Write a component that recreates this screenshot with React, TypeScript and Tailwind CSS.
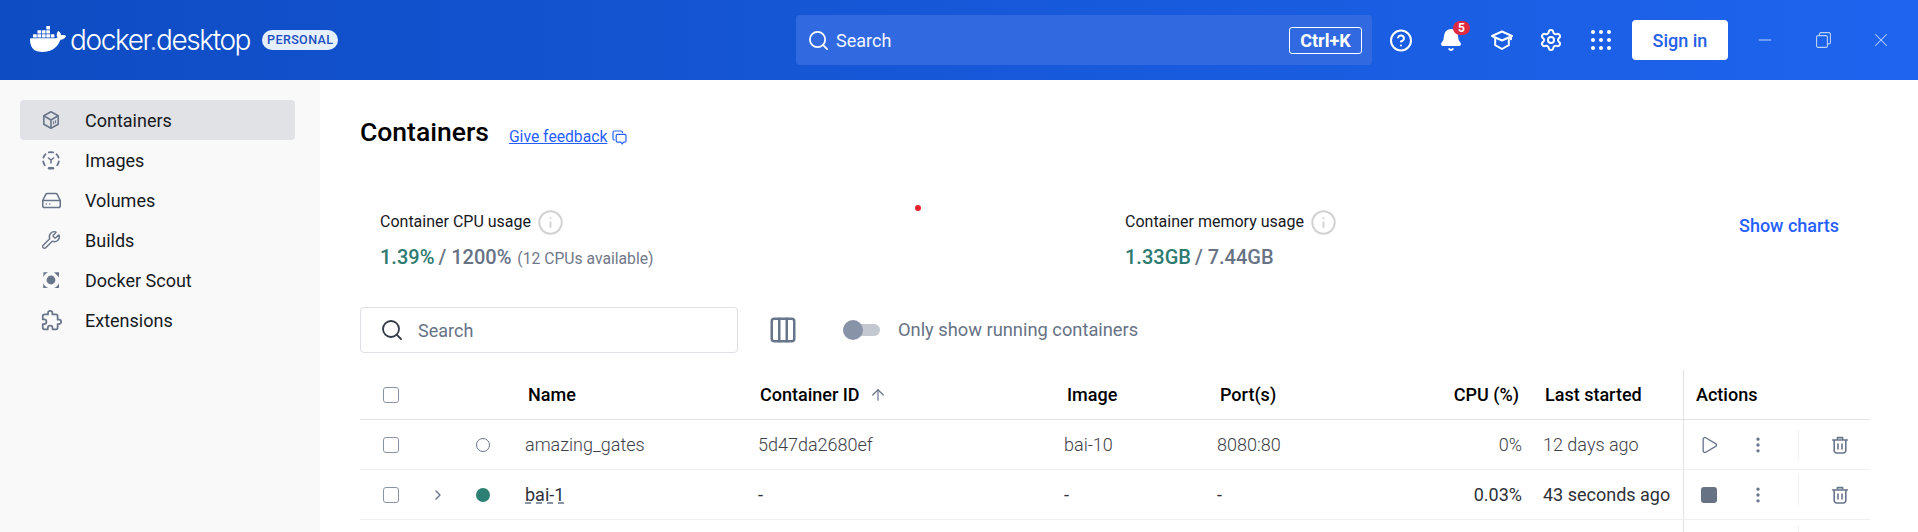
import React from "react";
import { SiDocker } from "react-icons/si";
import {
  Search, CircleHelp, Bell, Settings, Minus, X, Info, Columns3, ArrowUp, ChevronRight, Play, EllipsisVertical, HardDrive, Wrench,
} from "lucide-react";

const BoxIcon = () => (
  <svg width="20" height="20" viewBox="0 0 20 20" fill="none" stroke="#69758a" strokeWidth="1.6" strokeLinejoin="round">
    <path d="M10 1.8 17.2 5.8V14.2L10 18.2 2.8 14.2V5.8Z" />
    <path d="M2.8 5.8 10 10 17.2 5.8M10 10V18.2" />
    <path d="M12.6 11.2v3M14.6 10.2v3" strokeWidth="1.1" />
  </svg>
);
const ImagesIcon = () => (
  <svg width="20" height="20" viewBox="0 0 20 20" fill="none" stroke="#69758a" strokeWidth="1.8" strokeLinecap="round">
    <path d="M7.8 2.4a8 8 0 0 1 4.4 0" />
    <path d="M15.4 4.2a8 8 0 0 1 2.2 3.4" />
    <path d="M17.8 11.4a8 8 0 0 1-1.6 3.8" />
    <path d="M3.8 15.2a8 8 0 0 1-1.6-3.8" />
    <path d="M2.4 7.6a8 8 0 0 1 2.2-3.4" />
    <path d="M7.4 8 10 10l2.6-2M10 10v3" strokeWidth="1.5" />
    <path d="M8 18.2h4" strokeWidth="2.4" />
  </svg>
);
const ScoutIcon = () => (
  <svg width="20" height="20" viewBox="0 0 20 20" fill="#69758a">
    <circle cx="10" cy="10" r="4.4" />
    <path d="M13 2.2h5v5zM7 2.2H2.4v5c.7-2.2 2.4-4 4.6-5zM2.2 13v5h5c-2.3-.8-4.2-2.7-5-5zM18 13v5h-5c2.3-.8 4.2-2.7 5-5z" />
  </svg>
);
const PuzzleIcon = () => (
  <svg width="21" height="21" viewBox="0 0 24 24" fill="none" stroke="#69758a" strokeWidth="2" strokeLinejoin="round">
    <path d="M20.5 11H19V7c0-1.1-.9-2-2-2h-4V3.5C13 2.12 11.88 1 10.5 1S8 2.12 8 3.5V5H4c-1.1 0-1.99.9-1.99 2v3.8H3.5c1.49 0 2.7 1.21 2.7 2.7s-1.21 2.7-2.7 2.7H2V20c0 1.1.9 2 2 2h3.8v-1.5c0-1.49 1.21-2.7 2.7-2.7 1.49 0 2.7 1.21 2.7 2.7V22H17c1.1 0 2-.9 2-2v-4h1.5c1.38 0 2.5-1.12 2.5-2.5S21.88 11 20.5 11z" />
  </svg>
);
const CapIcon = () => (
  <svg width="24" height="24" viewBox="0 0 24 24" fill="none" stroke="white" strokeWidth="2" strokeLinejoin="round" strokeLinecap="round">
    <path d="M12 3.5 22 8l-10 4.5L2 8Z" />
    <path d="M5.2 10v7.2L12 21l6.8-3.8V10" />
    <path d="M21 8.2v3" />
  </svg>
);
const GridDots = () => (
  <svg width="20" height="20" viewBox="0 0 20 20" fill="white">
    {[2, 10, 18].map((y) => [2, 10, 18].map((x) => <circle key={`${x}-${y}`} cx={x} cy={y} r="2" />))}
  </svg>
);
const Restore = () => (
  <svg width="15" height="16" viewBox="0 0 15 16" fill="none" stroke="#bcd2fa" strokeWidth="1.1">
    <rect x="0.6" y="3.6" width="10.8" height="11.8" rx="1.5" />
    <path d="M3.5 3.4V2a1.4 1.4 0 0 1 1.4-1.4h8A1.4 1.4 0 0 1 14.4 2v8.5a1.4 1.4 0 0 1-1.4 1.4h-1.4" />
  </svg>
);
const Feedback = () => (
  <svg width="15" height="15" viewBox="0 0 15 15" fill="none" stroke="#2560ff" strokeWidth="1.2" strokeLinejoin="round">
    <path d="M10.5 3V2.4A1.4 1.4 0 0 0 9.1 1H2.4A1.4 1.4 0 0 0 1 2.4v6.2a1.4 1.4 0 0 0 1.4 1.4h.4" />
    <path d="M5.4 4.4h7.4A1.2 1.2 0 0 1 14 5.6v5.4a1.2 1.2 0 0 1-1.2 1.2h-1.3L10.2 14l-1.3-1.8H5.4A1.2 1.2 0 0 1 4.2 11V5.6a1.2 1.2 0 0 1 1.2-1.2Z" />
  </svg>
);
const TrashIcon = () => (
  <svg width="20" height="20" viewBox="0 0 20 20" fill="none" stroke="#69758a" strokeWidth="1.6" strokeLinecap="round" strokeLinejoin="round">
    <path d="M2.6 5h14.8M7.4 4.6V2.6h5.2v2" />
    <path d="M4.2 5.2v10.4a2.4 2.4 0 0 0 2.4 2.4h6.8a2.4 2.4 0 0 0 2.4-2.4V5.2" />
    <path d="M8 9v5M12 9v5" />
  </svg>
);

const Check = () => <div className="h-[16px] w-[16px] rounded-[3px] border-[1.5px] border-[#8993a8]" />;

const nav = [
  { label: "Containers", icon: <BoxIcon />, active: true },
  { label: "Images", icon: <ImagesIcon /> },
  { label: "Volumes", icon: <HardDrive size={21} color="#69758a" strokeWidth={1.8} /> },
  { label: "Builds", icon: <Wrench size={20} color="#69758a" strokeWidth={1.7} /> },
  { label: "Docker Scout", icon: <ScoutIcon /> },
  { label: "Extensions", icon: <PuzzleIcon /> },
];

const rowGrid = "grid grid-cols-[63px_40px_62px_233px_306px_153px_151px_154px_161px_187px] items-center";

function Actions({ running, lifted, hidden }: { running: boolean; lifted: boolean; hidden?: boolean }) {
  return (
    <div className="flex h-full items-center border-l-[1.5px] border-[#e1e2e6] pl-[14px]">
      <div className="flex w-[22px] justify-center">
        {hidden ? null : running ? (
          <div className="h-[16px] w-[16px] rounded-[3px] bg-[#677285]" />
        ) : (
          <Play size={20} color="#69758a" strokeWidth={1.6} />
        )}
      </div>
      <div className="ml-[28px] flex w-[20px] justify-center">
        {hidden ? null : <EllipsisVertical size={20} color="#69758a" strokeWidth={2} />}
      </div>
      <div className={`ml-[30px] flex h-[30px] w-[52px] items-center justify-end border-l border-[#f0f0f2] ${lifted ? "mb-[10px]" : ""}`}>
        {hidden ? null : (
          <div className={lifted ? "mt-[10px]" : ""}>
            <TrashIcon />
          </div>
        )}
      </div>
    </div>
  );
}

export default function App() {
  return (
    <div className="h-[532px] w-[1918px] overflow-hidden bg-white font-['Roboto',sans-serif] text-[18px] text-[#17191e]">
      <header className="flex h-[80px] items-center bg-linear-to-r from-[#0e4cc3] to-[#1e64ee] text-white">
        <div className="flex w-[796px] items-center pl-[30px]">
          <SiDocker size={36} color="white" className="mt-[-2px]" />
          <span className="ml-[4px] font-['Inter',sans-serif] text-[28px] leading-none font-light tracking-[-1.4px]">
            docker<span className="text-[#a9c4f7]">.</span>desktop
          </span>
          <span className="ml-[12px] flex h-[20px] items-center rounded-full bg-[#e5f0fc] px-[5px] text-[12.5px] font-medium tracking-[0.4px] text-[#1c4fc0]">
            PERSONAL
          </span>
        </div>
        <div className="flex h-[50px] w-[576px] items-center rounded-[4px] bg-[#316ae0] pr-[10px] pl-[11px]">
          <Search size={23} strokeWidth={1.8} />
          <span className="ml-[6px] text-[#f1f5fe]">Search</span>
          <span className="ml-auto flex h-[27px] w-[73px] items-center justify-center rounded-[3px] border border-white font-bold">
            Ctrl+K
          </span>
        </div>
        <div className="ml-[17px] flex w-[24px] justify-center">
          <CircleHelp size={25} strokeWidth={2} />
        </div>
        <div className="relative ml-[26px] flex w-[24px] justify-center">
          <Bell size={24} fill="white" strokeWidth={2} />
          <span className="absolute top-[-7px] left-[14px] flex h-[14px] w-[17px] items-center justify-center rounded-full bg-[#dc2a42] text-[12px] font-bold text-white">
            5
          </span>
        </div>
        <div className="ml-[27px] flex w-[24px] justify-center">
          <CapIcon />
        </div>
        <div className="ml-[25px] flex w-[24px] justify-center">
          <Settings size={24} strokeWidth={2} />
        </div>
        <div className="ml-[26px] flex w-[24px] justify-center">
          <GridDots />
        </div>
        <button className="ml-[19px] h-[40px] w-[96px] rounded-[4px] bg-white font-medium text-[#2560e8]">
          Sign in
        </button>
        <div className="ml-[25px] flex w-[24px] justify-center">
          <Minus size={20} color="#bcd2fa" strokeWidth={1.2} />
        </div>
        <div className="ml-[34px] flex w-[24px] justify-center">
          <Restore />
        </div>
        <div className="ml-[34px] flex w-[24px] justify-center">
          <X size={22} color="#bcd2fa" strokeWidth={1.1} />
        </div>
      </header>
      <div className="flex">
        <aside className="h-[452px] w-[320px] bg-[#f9f9fa] px-[20px] pt-[20px]">
          {nav.map((n) => (
            <div
              key={n.label}
              className={`flex h-[40px] w-[275px] items-center rounded-[4px] pl-[20px] ${n.active ? "bg-[#e1e2e6]" : ""}`}
            >
              <div className="flex w-[22px] justify-center">{n.icon}</div>
              <span className="ml-[23px]">{n.label}</span>
            </div>
          ))}
        </aside>
        <main className="w-[1598px] pt-[30px] pl-[40px]">
          <div className="flex h-[44px] items-center">
            <h1 className="text-[26.5px] font-medium text-black">Containers</h1>
            <a className="mt-[10px] ml-[20px] text-[15.7px] text-[#2560ff] underline">Give feedback</a>
            <span className="mt-[11px] ml-[5px]"><Feedback /></span>
          </div>
          <div className="relative mt-[56px] flex h-[60px] pl-[20px]">
            <span className="absolute top-[-5px] left-[555px] h-[6px] w-[6px] rounded-full bg-[#e8222e]" />
            <div className="w-[745px]">
              <div className="flex h-[24px] items-center text-[16px] text-[#17191e]">
                Container CPU usage
                <Info size={27} color="#d2d2d2" strokeWidth={1.7} className="ml-[6px]" />
              </div>
              <div className="mt-[8px] flex items-baseline text-[20px] font-medium text-[#677285]">
                <span className="text-[#2d7a70]">1.39%</span>
                <span className="ml-[4px]">/ 1200%</span>
                <span className="ml-[6px] text-[15.7px] font-normal text-[#70788a]">(12 CPUs available)</span>
              </div>
            </div>
            <div className="w-[614px]">
              <div className="flex h-[24px] items-center text-[16px] text-[#17191e]">
                Container memory usage
                <Info size={27} color="#d2d2d2" strokeWidth={1.7} className="ml-[6px]" />
              </div>
              <div className="mt-[8px] flex items-baseline text-[20px] font-medium text-[#677285]">
                <span className="text-[#2d7a70]">1.33GB</span>
                <span className="ml-[4px]">/ 7.44GB</span>
              </div>
            </div>
            <a className="mt-[2px] h-[24px] font-medium text-[#2560ff]">Show charts</a>
          </div>
          <div className="mt-[37px] flex h-[46px] items-center">
            <div className="flex h-[46px] w-[378px] items-center rounded-[4px] border border-[#dfe0e4] pl-[19px]">
              <Search size={24} color="#333a47" strokeWidth={1.8} />
              <span className="ml-[14px] text-[#677285]">Search</span>
            </div>
            <Columns3 size={30} color="#69758a" strokeWidth={2} className="ml-[30px]" />
            <div className="relative ml-[45px] h-[12px] w-[37px] rounded-full bg-[#c4c8d1]">
              <span className="absolute top-[-4px] left-0 h-[20px] w-[20px] rounded-full bg-[#8993a8]" />
            </div>
            <span className="ml-[18px] text-[18.3px] text-[#677285]">Only show running containers</span>
          </div>
          <div className="mt-[17px] w-[1510px]">
            <div className={`${rowGrid} h-[50px] border-b-[1.5px] border-[#e1e2e6] font-medium text-black`}>
              <div className="pl-[23px]"><Check /></div>
              <div />
              <div />
              <div className="pl-[3px]">Name</div>
              <div className="flex items-center pl-[2px]">
                Container ID
                <ArrowUp size={18} color="#69758a" strokeWidth={1.6} className="ml-[9px]" />
              </div>
              <div className="pl-[3px]">Image</div>
              <div className="pl-[3px]">Port(s)</div>
              <div className="pr-[3px] text-right">CPU (%)</div>
              <div className="pl-[23px]">Last started</div>
              <div className="flex h-full items-center border-l-[1.5px] border-[#e1e2e6] pl-[12px]">Actions</div>
            </div>
            <div className={`${rowGrid} h-[50px] border-b-[1.5px] border-[#f0f0f2] font-light text-[#3d4048]`}>
              <div className="pl-[23px]"><Check /></div>
              <div />
              <div className="pl-[13px]">
                <div className="h-[14px] w-[14px] rounded-full border-[1.5px] border-[#69758a]" />
              </div>
              <div>amazing_gates</div>
              <div>5d47da2680ef</div>
              <div>bai-10</div>
              <div>8080:80</div>
              <div className="text-right">0%</div>
              <div className="pl-[21px]">12 days ago</div>
              <Actions running={false} lifted={false} />
            </div>
            <div className={`${rowGrid} h-[50px] border-b-[1.5px] border-[#f0f0f2] text-[#2e3138]`}>
              <div className="pl-[23px]"><Check /></div>
              <div className="pl-[7px]"><ChevronRight size={16} color="#69758a" strokeWidth={2} /></div>
              <div className="pl-[13px]">
                <div className="h-[14px] w-[14px] rounded-full bg-[#2d7f73]" />
              </div>
              <div>
                <span className="underline decoration-[#8993a8] decoration-dashed underline-offset-2">bai-1</span>
              </div>
              <div>-</div>
              <div>-</div>
              <div>-</div>
              <div className="text-right">0.03%</div>
              <div className="pl-[21px]">43 seconds ago</div>
              <Actions running={true} lifted={true} />
            </div>
            <div className={`${rowGrid} h-[50px]`}>
              <div /><div /><div /><div /><div /><div /><div /><div /><div />
              <Actions running={false} lifted={true} hidden={true} />
            </div>
          </div>
        </main>
      </div>
    </div>
  );
}
